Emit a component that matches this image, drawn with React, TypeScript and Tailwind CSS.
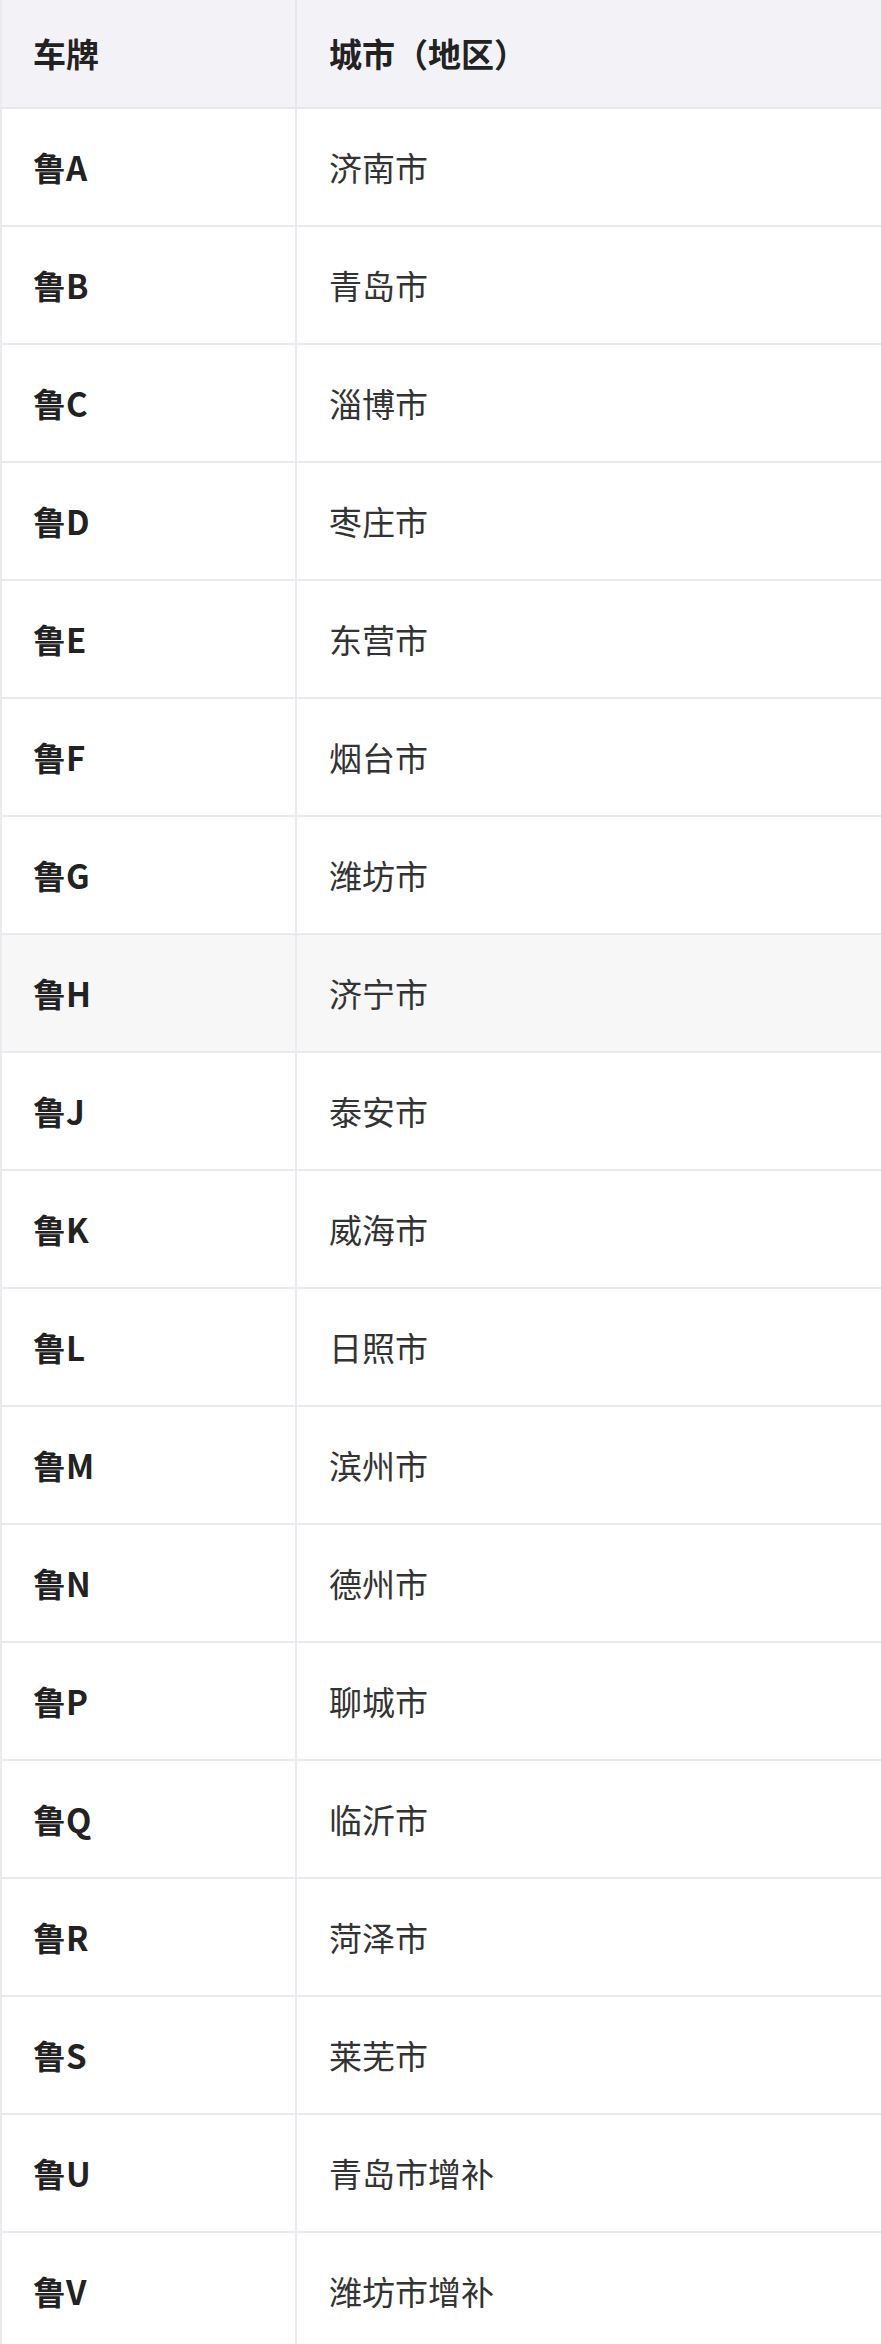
import React from "react";

const rows: [string, string][] = [
  ["鲁A", "济南市"],
  ["鲁B", "青岛市"],
  ["鲁C", "淄博市"],
  ["鲁D", "枣庄市"],
  ["鲁E", "东营市"],
  ["鲁F", "烟台市"],
  ["鲁G", "潍坊市"],
  ["鲁H", "济宁市"],
  ["鲁J", "泰安市"],
  ["鲁K", "威海市"],
  ["鲁L", "日照市"],
  ["鲁M", "滨州市"],
  ["鲁N", "德州市"],
  ["鲁P", "聊城市"],
  ["鲁Q", "临沂市"],
  ["鲁R", "菏泽市"],
  ["鲁S", "莱芜市"],
  ["鲁U", "青岛市增补"],
  ["鲁V", "潍坊市增补"],
];

export default function App() {
  return (
    <div
      className="w-[881px] bg-white text-[#222] overflow-hidden"
      style={{ fontFamily: '"Noto Sans CJK SC", "Noto Sans", sans-serif' }}
    >
      <div className="grid grid-cols-[295px_1fr] border-l-2 border-[#ebebef]">
        <div className="h-[109px] bg-[#f3f3f7] border-b-2 border-r-2 border-[#e8e8ec] flex items-center pl-[31px] text-[33px] font-bold">
          车牌
        </div>
        <div className="h-[109px] bg-[#f3f3f7] border-b-2 border-[#e8e8ec] flex items-center pl-[32px] text-[33px] font-bold">
          城市（地区）
        </div>
        {rows.map(([plate, city]) => {
          const hl = plate === "鲁H";
          return (
            <React.Fragment key={plate}>
              <div
                className={`h-[118px] border-b-2 border-r-2 border-[#ebebef] flex items-center pl-[31px] pt-[2px] text-[33px] font-bold ${hl ? "bg-[#f7f7f7]" : "bg-white"}`}
              >
                {plate}
              </div>
              <div
                className={`h-[118px] border-b-2 border-[#ebebef] flex items-center pl-[32px] pt-[2px] text-[33px] text-[#333] ${hl ? "bg-[#f7f7f7]" : "bg-white"}`}
              >
                {city}
              </div>
            </React.Fragment>
          );
        })}
      </div>
    </div>
  );
}
